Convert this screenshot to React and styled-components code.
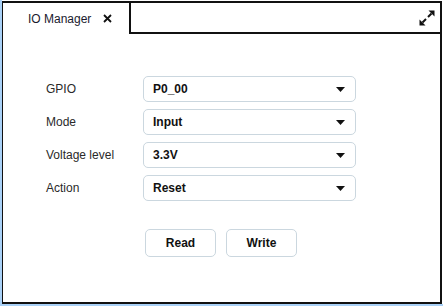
import React from "react";
import styled, { createGlobalStyle } from "styled-components";

const GlobalStyle = createGlobalStyle`
  html, body {
    margin: 0;
    padding: 0;
    background: #ffffff;
  }
  body {
    font-family: "Liberation Sans", Arial, sans-serif;
    font-size: 12px;
    color: #222;
  }
`;

const Page = styled.div`
  box-sizing: border-box;
  width: 443px;
  height: 306px;
  padding: 1px 1px 0 0;
  border-left: 2px solid #a9d1f7;
  border-bottom: 2px solid #a9d1f7;
  display: flex;
`;

const Window = styled.div`
  flex: 1;
  display: flex;
  flex-direction: column;
  border: 2px solid #111;
  border-left-width: 1px;
  background: #fff;
`;

const Header = styled.div`
  display: flex;
  height: 31px;
`;

const Tab = styled.div`
  box-sizing: border-box;
  flex: 0 0 128px;
  padding-left: 25px;
  display: flex;
  align-items: center;
  gap: 12px;
  border-right: 2px solid #111;
  color: #1a1a2e;
`;

const TabTitle = styled.span`
  padding-top: 1px;
`;

const HeaderRest = styled.div`
  flex: 1;
  display: flex;
  align-items: center;
  justify-content: flex-end;
  padding: 1px 5px 0 0;
  border-bottom: 2px solid #111;
`;

const Body = styled.div`
  flex: 1;
  padding: 42px 0 0 43px;
`;

const Form = styled.div`
  display: grid;
  grid-template-columns: 97px 213px;
  grid-auto-rows: 26px;
  row-gap: 7px;
  align-items: center;
`;

const Label = styled.span`
  color: #2a2a2a;
`;

const Select = styled.div`
  box-sizing: border-box;
  height: 26px;
  display: flex;
  align-items: center;
  justify-content: space-between;
  padding: 0 10px 0 9px;
  border: 1px solid #cbd7df;
  border-radius: 5px;
  font-weight: bold;
  color: #111;
`;

const Actions = styled.div`
  display: flex;
  gap: 10px;
  margin: 28px 0 0 99px;
`;

const Button = styled.button`
  box-sizing: border-box;
  width: 71px;
  height: 28px;
  border: 1px solid #cbd7df;
  border-radius: 5px;
  background: #fff;
  font-family: "Liberation Sans", Arial, sans-serif;
  font-size: 12px;
  font-weight: bold;
  color: #111;
  padding: 0;
`;

const CloseIcon = () => (
  <svg width="9" height="9" viewBox="0 0 9 9">
    <path d="M1 1 L8 8 M8 1 L1 8" stroke="#111" strokeWidth="1.8" />
  </svg>
);

const MaximizeIcon = () => (
  <svg width="16" height="16" viewBox="0 0 16 16">
    <path d="M15.5 0.5 L9.5 0.5 L15.5 6.5 Z" fill="#111" />
    <path d="M12.5 3.5 L9 7" stroke="#111" strokeWidth="2" />
    <path d="M0.5 15.5 L0.5 9.5 L6.5 15.5 Z" fill="#111" />
    <path d="M3.5 12.5 L7 9" stroke="#111" strokeWidth="2" />
  </svg>
);

const Caret = () => (
  <svg width="9" height="5" viewBox="0 0 9 5">
    <path d="M0 0 L9 0 L4.5 5 Z" fill="#111" />
  </svg>
);

const fields = [
  { label: "GPIO", value: "P0_00" },
  { label: "Mode", value: "Input" },
  { label: "Voltage level", value: "3.3V" },
  { label: "Action", value: "Reset" }
];

const App = () => (
  <>
    <GlobalStyle />
    <Page>
      <Window>
        <Header>
          <Tab>
            <TabTitle>IO Manager</TabTitle>
            <CloseIcon />
          </Tab>
          <HeaderRest>
            <MaximizeIcon />
          </HeaderRest>
        </Header>
        <Body>
          <Form>
            {fields.map(({ label, value }) => (
              <React.Fragment key={label}>
                <Label>{label}</Label>
                <Select>
                  <span>{value}</span>
                  <Caret />
                </Select>
              </React.Fragment>
            ))}
          </Form>
          <Actions>
            <Button>Read</Button>
            <Button>Write</Button>
          </Actions>
        </Body>
      </Window>
    </Page>
  </>
);

export default App;
